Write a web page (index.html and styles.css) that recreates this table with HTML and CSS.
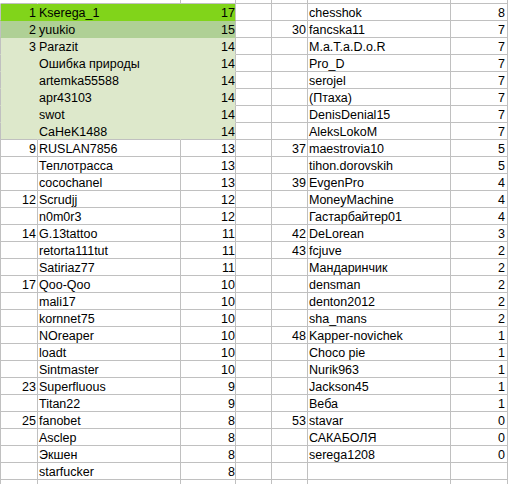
FILE: index.html
```html
<!DOCTYPE html>
<html>
<head>
<meta charset="utf-8">
<link rel="stylesheet" href="styles.css">
</head>
<body>
<div class="sheet">
  <div class="row top"><div class="c"></div><div class="c"></div><div class="c"></div><div class="c"></div><div class="c"></div><div class="c"></div><div class="c"></div></div>
  <div class="row hl g1"><div class="c f rk">1</div><div class="c f nm">Kserega_1</div><div class="c f sc">17</div><div class="c"></div><div class="c rk"></div><div class="c nm">chesshok</div><div class="c sc r">8</div></div>
  <div class="row hl g2"><div class="c f rk">2</div><div class="c f nm">yuukio</div><div class="c f sc">15</div><div class="c"></div><div class="c rk">30</div><div class="c nm">fancska11</div><div class="c sc r">7</div></div>
  <div class="row hl g3"><div class="c f rk">3</div><div class="c f nm">Parazit</div><div class="c f sc">14</div><div class="c"></div><div class="c rk"></div><div class="c nm">M.a.T.a.D.o.R</div><div class="c sc r">7</div></div>
  <div class="row hl g3"><div class="c f rk"></div><div class="c f nm">Ошибка природы</div><div class="c f sc">14</div><div class="c"></div><div class="c rk"></div><div class="c nm">Pro_D</div><div class="c sc r">7</div></div>
  <div class="row hl g3"><div class="c f rk"></div><div class="c f nm">artemka55588</div><div class="c f sc">14</div><div class="c"></div><div class="c rk"></div><div class="c nm">serojel</div><div class="c sc r">7</div></div>
  <div class="row hl g3"><div class="c f rk"></div><div class="c f nm">apr43103</div><div class="c f sc">14</div><div class="c"></div><div class="c rk"></div><div class="c nm">(Птаха)</div><div class="c sc r">7</div></div>
  <div class="row hl g3"><div class="c f rk"></div><div class="c f nm">swot</div><div class="c f sc">14</div><div class="c"></div><div class="c rk"></div><div class="c nm">DenisDenial15</div><div class="c sc r">7</div></div>
  <div class="row hl g3 last"><div class="c f rk"></div><div class="c f nm">CaHeK1488</div><div class="c f sc">14</div><div class="c"></div><div class="c rk"></div><div class="c nm">AleksLokoM</div><div class="c sc r">7</div></div>
  <div class="row"><div class="c rk">9</div><div class="c nm">RUSLAN7856</div><div class="c sc">13</div><div class="c"></div><div class="c rk">37</div><div class="c nm">maestrovia10</div><div class="c sc r">5</div></div>
  <div class="row"><div class="c rk"></div><div class="c nm">Теплотрасса</div><div class="c sc">13</div><div class="c"></div><div class="c rk"></div><div class="c nm">tihon.dorovskih</div><div class="c sc r">5</div></div>
  <div class="row"><div class="c rk"></div><div class="c nm">cocochanel</div><div class="c sc">13</div><div class="c"></div><div class="c rk">39</div><div class="c nm">EvgenPro</div><div class="c sc r">4</div></div>
  <div class="row"><div class="c rk">12</div><div class="c nm">Scrudjj</div><div class="c sc">12</div><div class="c"></div><div class="c rk"></div><div class="c nm">MoneyMachine</div><div class="c sc r">4</div></div>
  <div class="row"><div class="c rk"></div><div class="c nm">n0m0r3</div><div class="c sc">12</div><div class="c"></div><div class="c rk"></div><div class="c nm">Гастарбайтер01</div><div class="c sc r">4</div></div>
  <div class="row"><div class="c rk">14</div><div class="c nm">G.13tattoo</div><div class="c sc">11</div><div class="c"></div><div class="c rk">42</div><div class="c nm">DeLorean</div><div class="c sc r">3</div></div>
  <div class="row"><div class="c rk"></div><div class="c nm">retorta111tut</div><div class="c sc">11</div><div class="c"></div><div class="c rk">43</div><div class="c nm">fcjuve</div><div class="c sc r">2</div></div>
  <div class="row"><div class="c rk"></div><div class="c nm">Satiriaz77</div><div class="c sc">11</div><div class="c"></div><div class="c rk"></div><div class="c nm">Мандаринчик</div><div class="c sc r">2</div></div>
  <div class="row"><div class="c rk">17</div><div class="c nm">Qoo-Qoo</div><div class="c sc">10</div><div class="c"></div><div class="c rk"></div><div class="c nm">densman</div><div class="c sc r">2</div></div>
  <div class="row"><div class="c rk"></div><div class="c nm">mali17</div><div class="c sc">10</div><div class="c"></div><div class="c rk"></div><div class="c nm">denton2012</div><div class="c sc r">2</div></div>
  <div class="row"><div class="c rk"></div><div class="c nm">kornnet75</div><div class="c sc">10</div><div class="c"></div><div class="c rk"></div><div class="c nm">sha_mans</div><div class="c sc r">2</div></div>
  <div class="row"><div class="c rk"></div><div class="c nm">NOreaper</div><div class="c sc">10</div><div class="c"></div><div class="c rk">48</div><div class="c nm">Kapper-novichek</div><div class="c sc r">1</div></div>
  <div class="row"><div class="c rk"></div><div class="c nm">loadt</div><div class="c sc">10</div><div class="c"></div><div class="c rk"></div><div class="c nm">Choco pie</div><div class="c sc r">1</div></div>
  <div class="row"><div class="c rk"></div><div class="c nm">Sintmaster</div><div class="c sc">10</div><div class="c"></div><div class="c rk"></div><div class="c nm">Nurik963</div><div class="c sc r">1</div></div>
  <div class="row"><div class="c rk">23</div><div class="c nm">Superfluous</div><div class="c sc">9</div><div class="c"></div><div class="c rk"></div><div class="c nm">Jackson45</div><div class="c sc r">1</div></div>
  <div class="row"><div class="c rk"></div><div class="c nm">Titan22</div><div class="c sc">9</div><div class="c"></div><div class="c rk"></div><div class="c nm">Веба</div><div class="c sc r">1</div></div>
  <div class="row"><div class="c rk">25</div><div class="c nm">fanobet</div><div class="c sc">8</div><div class="c"></div><div class="c rk">53</div><div class="c nm">stavar</div><div class="c sc r">0</div></div>
  <div class="row"><div class="c rk"></div><div class="c nm">Asclep</div><div class="c sc">8</div><div class="c"></div><div class="c rk"></div><div class="c nm">САКАБОЛЯ</div><div class="c sc r">0</div></div>
  <div class="row"><div class="c rk"></div><div class="c nm">Экшен</div><div class="c sc">8</div><div class="c"></div><div class="c rk"></div><div class="c nm">serega1208</div><div class="c sc r">0</div></div>
  <div class="row"><div class="c rk"></div><div class="c nm">starfucker</div><div class="c sc">8</div><div class="c"></div><div class="c rk"></div><div class="c nm"></div><div class="c sc r"></div></div>
  <div class="row bottom"><div class="c"></div><div class="c"></div><div class="c"></div><div class="c"></div><div class="c"></div><div class="c"></div><div class="c"></div></div>
</div>
</body>
</html>
```
FILE: styles.css
```css
html, body {
  margin: 0;
  padding: 0;
  background: #ffffff;
}
body {
  font-family: "Liberation Sans", Arial, sans-serif;
  font-size: 12.5px;
  color: #000000;
}
.sheet {
  width: 508px;
  overflow: hidden;
}
.row {
  display: grid;
  grid-template-columns: 38px 143px 55px 36px 36px 143px 57px;
  height: 17px;
}
.c {
  box-sizing: border-box;
  border-right: 1px solid #c0c0c0;
  border-bottom: 1px solid #c0c0c0;
  padding: 1px 1px 0 1px;
  line-height: 16px;
  white-space: nowrap;
  overflow: hidden;
}
.row > .c:first-child {
  border-left: 1px solid #c0c0c0;
}
.rk, .sc {
  text-align: right;
}
.sc {
  padding-right: 0;
}
.sc.r {
  padding-right: 2px;
}
.top {
  height: 4px;
}
.top .c {
  padding: 0;
}
.top .c:first-child {
  border-left-color: transparent;
  border-right-color: transparent;
}
.bottom {
  height: 4px;
}
.bottom .c {
  padding: 0;
  border-bottom: 0;
}
.g1 .f {
  background-color: #81d41a;
  border-color: #81d41a;
}
.g2 .f {
  background-color: #afd095;
  border-color: #afd095;
}
.g3 .f {
  background-color: #dde8cb;
  border-color: #dde8cb;
}
.hl .f.sc {
  border-right-color: #c0c0c0;
}
.hl.last .f {
  border-bottom-color: #c0c0c0;
}
```
